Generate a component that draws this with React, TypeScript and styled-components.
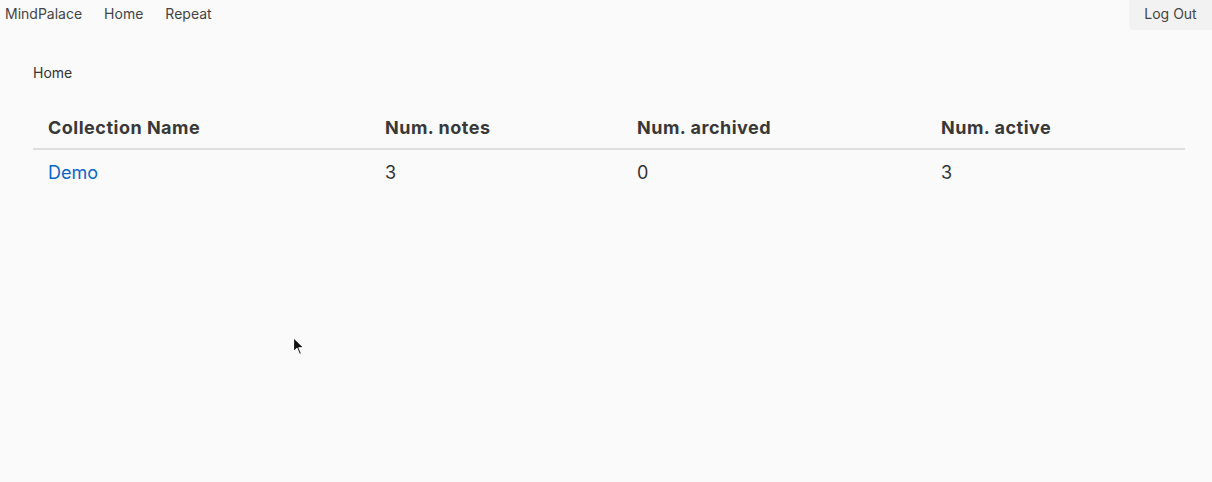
import React from 'react'
import styled, { createGlobalStyle } from 'styled-components'

const GlobalStyle = createGlobalStyle`
    html, body {
        margin: 0;
        padding: 0;
        background: #fafafa;
        font-family: Inter, "Noto Sans", "Liberation Sans", sans-serif;
        color: #333;
    }
`

const Page = styled.div`
    min-height: 482px;
    position: relative;
    overflow: hidden;
`

const NavBar = styled.nav`
    display: flex;
    align-items: flex-start;
    height: 26px;
    padding-left: 5px;
`

const NavLinks = styled.div`
    display: flex;
    gap: 22px;
    flex: 1;
    height: 26px;
    align-items: center;
`

const NavLink = styled.a`
    font-size: 14px;
    color: #444;
    text-decoration: none;
    cursor: pointer;
`

const LogOut = styled.button`
    width: 83px;
    height: 30px;
    padding: 0 0 4px;
    border: none;
    background: #f2f2f2;
    border-bottom-left-radius: 4px;
    font-family: inherit;
    font-size: 14px;
    color: #444;
    cursor: pointer;
`

const Content = styled.main`
    padding: 38px 27px 0 33px;
`

const Breadcrumb = styled.div`
    font-size: 14px;
    color: #333;
    margin-bottom: 30px;
`

const Table = styled.table`
    width: 100%;
    border-collapse: collapse;
    table-layout: fixed;
`

const HeadCell = styled.th<{ $width: number }>`
    width: ${(p) => p.$width}px;
    text-align: left;
    font-size: 18px;
    font-weight: 700;
    letter-spacing: 0.5px;
    color: #383838;
    padding: 6px 15px 10px;
    border-bottom: 2px solid #dedede;
`

const Cell = styled.td`
    font-size: 18px;
    color: #333;
    padding: 12px 15px 11px;
`

const CollectionLink = styled.a`
    color: #0a66c8;
    text-decoration: none;
    cursor: pointer;
`

const Pointer = styled.svg`
    position: absolute;
    left: 292px;
    top: 336px;
`

const columns = [
    { name: 'Collection Name', width: 307 },
    { name: 'Num. notes', width: 222 },
    { name: 'Num. archived', width: 274 },
    { name: 'Num. active', width: 229 },
]

const collections = [{ name: 'Demo', notes: 3, archived: 0, active: 3 }]

export default function App(): JSX.Element {
    return (
        <Page>
            <GlobalStyle />
            <NavBar>
                <NavLinks>
                    <NavLink>MindPalace</NavLink>
                    <NavLink>Home</NavLink>
                    <NavLink>Repeat</NavLink>
                </NavLinks>
                <LogOut>Log Out</LogOut>
            </NavBar>
            <Content>
                <Breadcrumb>Home</Breadcrumb>
                <Table>
                    <thead>
                        <tr>
                            {columns.map((col) => (
                                <HeadCell key={col.name} $width={col.width}>
                                    {col.name}
                                </HeadCell>
                            ))}
                        </tr>
                    </thead>
                    <tbody>
                        {collections.map((c) => (
                            <tr key={c.name}>
                                <Cell>
                                    <CollectionLink>{c.name}</CollectionLink>
                                </Cell>
                                <Cell>{c.notes}</Cell>
                                <Cell>{c.archived}</Cell>
                                <Cell>{c.active}</Cell>
                            </tr>
                        ))}
                    </tbody>
                </Table>
            </Content>
            <Pointer width="14" height="22" viewBox="0 0 14 22">
                <path
                    d="M1.5 1.5 L1.5 16 L5 12.5 L7.5 18.5 L9.5 17.6 L7 11.8 L12 11.8 Z"
                    fill="#111"
                    stroke="#fff"
                    strokeWidth="1.2"
                    strokeLinejoin="round"
                />
            </Pointer>
        </Page>
    )
}
